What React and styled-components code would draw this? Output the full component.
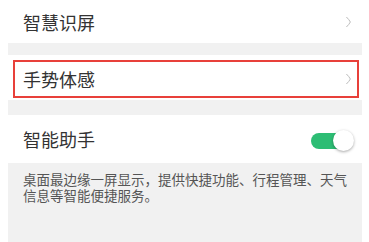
import React from "react";
import styled, { createGlobalStyle } from "styled-components";

const GlobalStyle = createGlobalStyle`
  html, body {
    margin: 0;
    padding: 0;
    background: #fff;
  }
  body {
    font-family: "Noto Sans CJK SC", "Noto Sans", sans-serif;
    color: #333;
  }
`;

const Chevron = () => (
  <svg width="7" height="12" viewBox="0 0 7 12">
    <path d="M1.4 1 Q4 3.5 5.4 6 Q4 8.5 1.4 11" fill="none" stroke="#bcbcbc" strokeWidth="1" />
  </svg>
);

const App = () => {
  return (
    <Page>
      <GlobalStyle />
      <Row height={43}>
        <Title>智慧识屏</Title>
        <Chevron />
      </Row>
      <Gap height={12} />
      <Frame>
        <Marked>
          <Title>手势体感</Title>
          <Chevron />
        </Marked>
      </Frame>
      <Gap height={15} />
      <Row height={48}>
        <Title>智能助手</Title>
        <Switch>
          <Track />
          <Knob />
        </Switch>
      </Row>
      <Note>
        桌面最边缘一屏显示，提供快捷功能、行程管理、天气信息等智能便捷服务。
      </Note>
    </Page>
  );
};

const Page = styled.div`
  width: 369px;
  height: 242px;
  padding: 0 7px 0 8px;
  box-sizing: border-box;
  display: flex;
  flex-direction: column;
  overflow: hidden;
`;

const Row = styled.div`
  height: ${(p) => p.height}px;
  display: flex;
  align-items: center;
  justify-content: space-between;
  padding: 0 10px 0 15px;
  background: #fff;
  flex-shrink: 0;
`;

const Title = styled.span`
  font-size: 18px;
  line-height: 20px;
  color: #333;
`;

const Gap = styled.div`
  height: ${(p) => p.height}px;
  background: #f1f1f1;
  flex-shrink: 0;
`;

const Frame = styled.div`
  height: 45px;
  padding: 5px 3px 2px 5px;
  box-sizing: border-box;
  background: #fff;
  flex-shrink: 0;
`;

const Marked = styled.div`
  height: 38px;
  box-sizing: border-box;
  border: 2px solid #e8403a;
  display: flex;
  align-items: center;
  justify-content: space-between;
  padding: 0 5px 0 8px;
`;

const Switch = styled.div`
  position: relative;
  width: 43px;
  height: 22px;
  margin-top: 3px;
  margin-right: -2px;
`;

const Track = styled.div`
  position: absolute;
  left: 0;
  top: 3px;
  width: 36px;
  height: 16px;
  border-radius: 8px;
  background: #2dbd74;
`;

const Knob = styled.div`
  position: absolute;
  right: 0;
  top: 0;
  width: 21px;
  height: 21px;
  border-radius: 50%;
  background: #fff;
  box-shadow: 0 1px 3px rgba(0, 0, 0, 0.35);
`;

const Note = styled.div`
  flex: 1;
  background: #f1f1f1;
  padding: 9px 12px 0 15px;
  font-size: 13.5px;
  line-height: 15.5px;
  color: #555;
`;

export default App;
